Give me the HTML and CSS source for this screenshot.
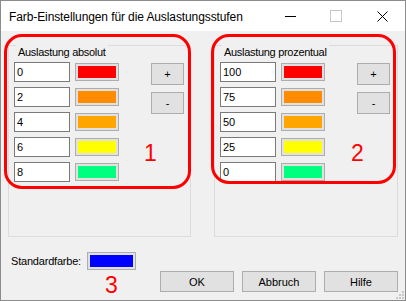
FILE: index.html
```html
<!DOCTYPE html>
<html lang="de">
  <head>
    <meta charset="UTF-8" />
    <title>Farb-Einstellungen</title>
    <link rel="stylesheet" href="styles.css">
  </head>
  <body>
    <div class="window">
      <div class="titlebar">
        <div class="title">Farb-Einstellungen für die Auslastungsstufen</div>
        <div class="controls">
          <span class="ctl ctl-min"></span>
          <span class="ctl ctl-max"></span>
          <span class="ctl ctl-close">
            <svg width="11" height="11" viewBox="0 0 11 11">
              <path d="M0.5 0.5 L10.5 10.5 M10.5 0.5 L0.5 10.5" stroke="#000" stroke-width="1" fill="none" />
            </svg>
          </span>
        </div>
      </div>

      <div class="content">
        <div class="groups">
          <div class="group group-left">
            <div class="group-title">Auslastung absolut</div>
            <div class="group-body">
              <div class="rows">
                <div class="row"><div class="textbox">0</div><div class="swatch"><span class="fill red"></span></div></div>
                <div class="row"><div class="textbox">2</div><div class="swatch"><span class="fill darkorange"></span></div></div>
                <div class="row"><div class="textbox">4</div><div class="swatch"><span class="fill orange"></span></div></div>
                <div class="row"><div class="textbox">6</div><div class="swatch"><span class="fill yellow"></span></div></div>
                <div class="row"><div class="textbox">8</div><div class="swatch"><span class="fill green"></span></div></div>
              </div>
              <div class="side-buttons">
                <button class="btn btn-small">+</button>
                <button class="btn btn-small">-</button>
              </div>
            </div>
          </div>

          <div class="group group-right">
            <div class="group-title">Auslastung prozentual</div>
            <div class="group-body">
              <div class="rows">
                <div class="row"><div class="textbox">100</div><div class="swatch"><span class="fill red"></span></div></div>
                <div class="row"><div class="textbox">75</div><div class="swatch"><span class="fill darkorange"></span></div></div>
                <div class="row"><div class="textbox">50</div><div class="swatch"><span class="fill orange"></span></div></div>
                <div class="row"><div class="textbox">25</div><div class="swatch"><span class="fill yellow"></span></div></div>
                <div class="row"><div class="textbox">0</div><div class="swatch"><span class="fill green"></span></div></div>
              </div>
              <div class="side-buttons">
                <button class="btn btn-small">+</button>
                <button class="btn btn-small">-</button>
              </div>
            </div>
          </div>
        </div>

        <div class="default-row">
          <span class="label">Standardfarbe:</span>
          <div class="swatch swatch-wide"><span class="fill blue"></span></div>
        </div>

        <div class="dialog-buttons">
          <button class="btn btn-dialog">OK</button>
          <button class="btn btn-dialog">Abbruch</button>
          <button class="btn btn-dialog">Hilfe</button>
        </div>
      </div>

      <div class="mark mark-1"></div>
      <div class="mark mark-2"></div>
      <div class="num num-1">1</div>
      <div class="num num-2">2</div>
      <div class="num num-3">3</div>

      <svg class="grip" width="8" height="8" viewBox="0 0 8 8">
        <rect x="6" y="0" width="2" height="2" fill="#c8c8c8" />
        <rect x="3" y="3" width="2" height="2" fill="#c8c8c8" />
        <rect x="6" y="3" width="2" height="2" fill="#c8c8c8" />
        <rect x="0" y="6" width="2" height="2" fill="#c8c8c8" />
        <rect x="3" y="6" width="2" height="2" fill="#c8c8c8" />
        <rect x="6" y="6" width="2" height="2" fill="#c8c8c8" />
      </svg>
    </div>
  </body>
</html>
```

FILE: styles.css
```css
* {
  margin: 0;
  padding: 0;
  box-sizing: border-box;
}

body {
  font-family: "Liberation Sans", Arial, sans-serif;
  font-size: 11px;
  color: #000;
  background: #fff;
}

.window {
  position: relative;
  width: 406px;
  height: 301px;
  border: 1px solid #8c8c8c;
  background: #f0f0f0;
  display: flex;
  flex-direction: column;
}

/* title bar */
.titlebar {
  height: 30px;
  background: #fff;
  display: flex;
  align-items: center;
  justify-content: space-between;
  padding-left: 8px;
}

.title {
  font-size: 12px;
  margin-top: 1px;
  letter-spacing: -0.1px;
}

.controls {
  display: flex;
  height: 100%;
}

.ctl {
  width: 46px;
  display: flex;
  align-items: center;
  justify-content: center;
}

.ctl-min::before {
  content: "";
  width: 11px;
  height: 1px;
  background: #000;
}

.ctl-max::before {
  content: "";
  width: 10px;
  height: 10px;
  border: 1px solid #c8c8c8;
}

/* content */
.content {
  flex: 1;
  padding: 14px 7px 0 7px;
  display: flex;
  flex-direction: column;
}

.groups {
  display: flex;
  gap: 23px;
}

.group {
  border: 1px solid #dcdcdc;
  height: 192px;
}

.group-left {
  width: 183px;
}

.group-right {
  width: 184px;
}

.group-title {
  margin: -8px 0 0 7px;
  padding: 0 2px;
  background: #f0f0f0;
  display: inline-block;
  line-height: 14px;
  letter-spacing: -0.3px;
}

.group-body {
  display: flex;
  padding: 3px 0 0 5px;
}

.rows {
  display: flex;
  flex-direction: column;
  gap: 5px;
}

.row {
  display: flex;
  align-items: center;
  gap: 5px;
}

.textbox {
  width: 56px;
  height: 20px;
  background: #fff;
  border: 1px solid #7a7a7a;
  padding-left: 2px;
  line-height: 18px;
}

.swatch {
  width: 44px;
  height: 18px;
  border: 1px solid #adadad;
  background: #e1e1e1;
  padding: 2px;
  display: flex;
}

.fill {
  flex: 1;
}

.red { background: #ff0000; }
.darkorange { background: #ff8c00; }
.orange { background: #ffa500; }
.yellow { background: #ffff00; }
.green { background: #00ff7f; }
.blue { background: #0000ff; }

.side-buttons {
  display: flex;
  flex-direction: column;
  gap: 7px;
  margin: 1px 0 0 32px;
}

.btn {
  font-family: inherit;
  font-size: 11px;
  color: #000;
  background: #e1e1e1;
  border: 1px solid #adadad;
}

.btn-small {
  width: 33px;
  height: 22px;
}

/* bottom area */
.default-row {
  display: flex;
  align-items: center;
  gap: 6px;
  margin: 15px 0 0 3px;
  height: 18px;
}

.label {
  font-size: 11px;
  letter-spacing: -0.2px;
}

.swatch-wide {
  width: 49px;
}

.dialog-buttons {
  display: flex;
  justify-content: flex-end;
  gap: 8px;
  margin-top: 1px;
}

.btn-dialog {
  width: 74px;
  height: 21px;
}

/* red annotations drawn over the dialog */
.mark {
  position: absolute;
  border: 3px solid #ff0000;
  border-radius: 18px;
}

.mark-1 {
  left: 3px;
  top: 33px;
  width: 187px;
  height: 155px;
}

.mark-2 {
  left: 210px;
  top: 33px;
  width: 185px;
  height: 150px;
}

.num {
  position: absolute;
  color: #ff0000;
  font-size: 23px;
  line-height: 1;
}

.num-1 { left: 143px; top: 141px; }
.num-2 { left: 350px; top: 141px; }
.num-3 { left: 104px; top: 273px; }

.grip {
  position: absolute;
  right: 1px;
  bottom: 1px;
}
```
